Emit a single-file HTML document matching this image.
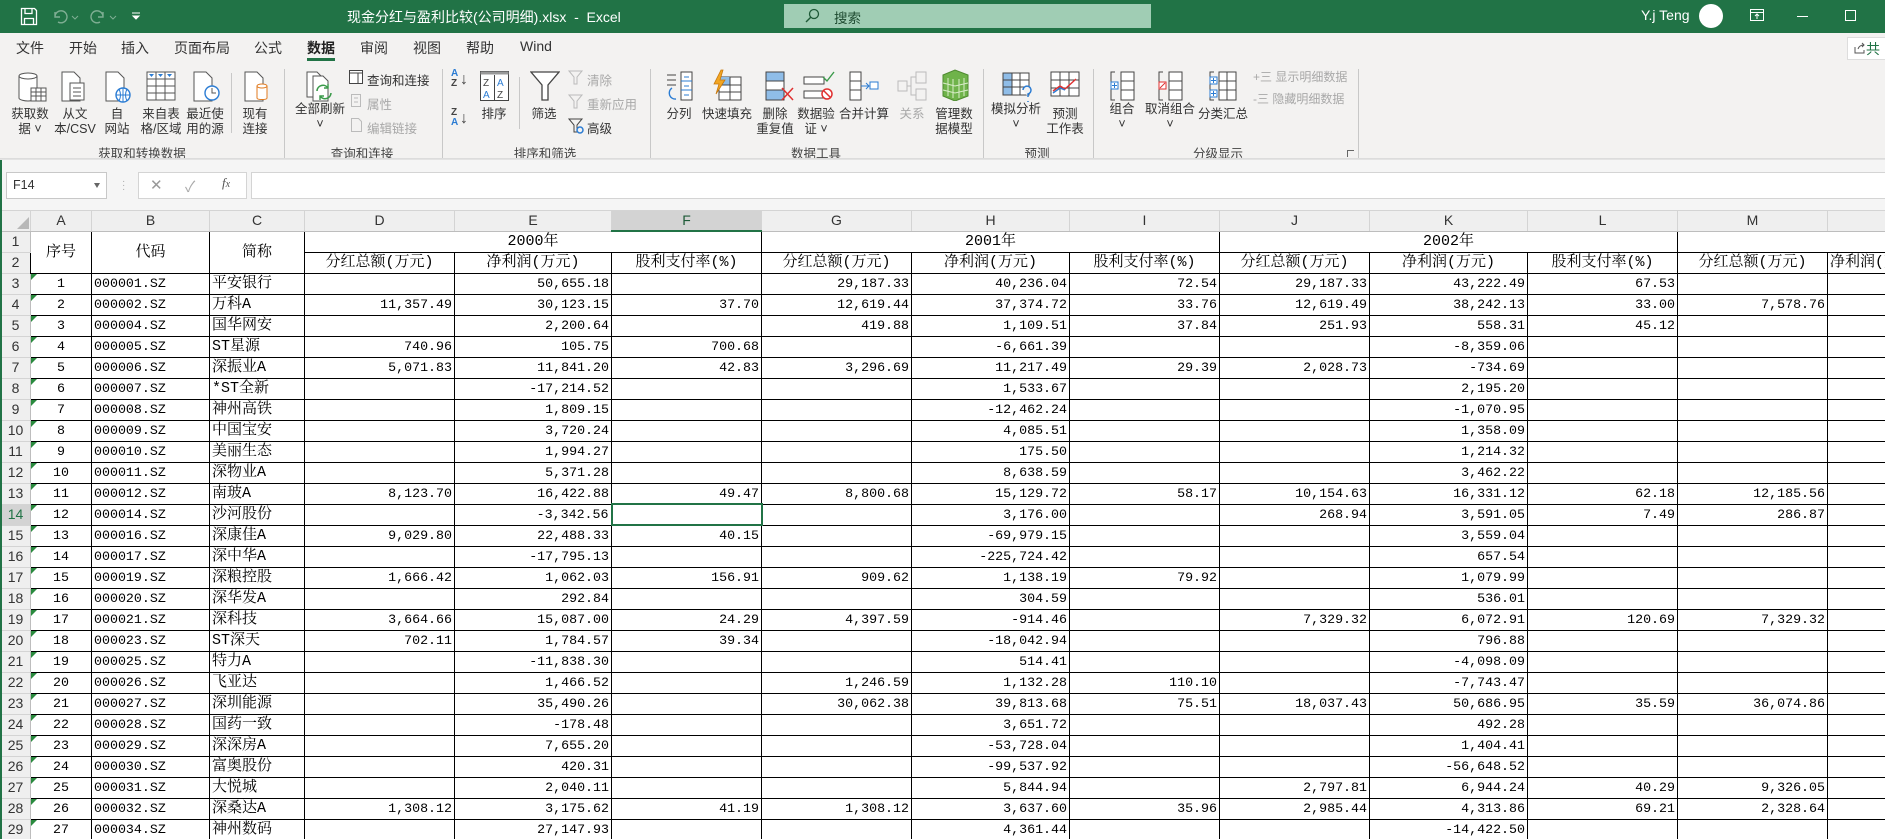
<!DOCTYPE html>
<html><head><meta charset="utf-8">
<style>
*{margin:0;padding:0;box-sizing:border-box}
body{width:1885px;height:839px;overflow:hidden;background:#fff;font-family:"Liberation Sans","Noto Sans CJK SC",sans-serif;position:relative}
.abs{position:absolute}
#title{left:0;top:0;width:1885px;height:33px;background:#217346;color:#fff}
#ribbon{left:0;top:33px;width:1885px;height:127px;background:#f3f2f1}
.tab{position:absolute;top:5px;font-size:14px;color:#333}
.lbl{position:absolute;width:90px;text-align:center;font-size:12.5px;color:#333;line-height:15px}
.sm{position:absolute;font-size:12.5px;color:#333;white-space:nowrap}
.g{color:#a8a8a8}
.sep{position:absolute;width:1px;background:#c8c8c8}
.glbl{position:absolute;top:110px;width:120px;text-align:center;font-size:12.5px;color:#444}
#fbar{left:0;top:160px;width:1885px;height:50px;background:#f5f5f5}
#grid{left:0;top:210px;width:1885px;height:629px;overflow:hidden}
table{border-collapse:collapse;table-layout:fixed;width:2027px;font-family:"Liberation Mono","Noto Serif CJK SC",monospace;font-size:13.3px;color:#000}
td{height:21px;border:1px solid #000;white-space:nowrap;overflow:hidden;text-align:right;padding:0 2px;line-height:19px}
tr.ch td{height:20px;background:#efefef;border:1px solid #d4d4d4;border-bottom-color:#bdbdbd;text-align:center;font-family:"Liberation Sans",sans-serif;font-size:14px;color:#333}
td.rh{background:#efefef;border:1px solid #d4d4d4;border-right-color:#bdbdbd;text-align:center;font-family:"Liberation Sans",sans-serif;font-size:14px;color:#333;padding:0}
td.a{text-align:center;position:relative}
td.a::before{content:"";position:absolute;left:0;top:0;border-top:6px solid #2a8a3e;border-right:6px solid transparent}
td.b{text-align:left}
td.c{text-align:left;font-size:15px}
td.h{text-align:center;font-size:15px}
</style></head><body>

<div id="title" class="abs">
 <svg class="abs" style="left:20px;top:7px" width="18" height="19" viewBox="0 0 18 19"><path d="M1.5 1.5h13l2 2v14h-15z M5 1.5v5h7v-5 M4.5 17.5v-6h9v6" fill="none" stroke="#fff" stroke-width="1.3"/></svg>
 <svg class="abs" style="left:50px;top:8px" width="30" height="17"><path d="M5 4v5h5 M5 9 A6 6 0 1 1 8 14" fill="none" stroke="#7fae93" stroke-width="1.4"/><path d="M22 8l3 3 3-3" fill="none" stroke="#7fae93"/></svg>
 <svg class="abs" style="left:88px;top:8px" width="30" height="17"><path d="M15 4v5h-5 M15 9 A6 6 0 1 0 12 14" fill="none" stroke="#7fae93" stroke-width="1.4"/><path d="M22 8l3 3 3-3" fill="none" stroke="#7fae93"/></svg>
 <svg class="abs" style="left:131px;top:11px" width="10" height="10"><path d="M1 2h8 M2 5l3 3 3-3z" stroke="#fff" fill="#fff"/></svg>
 <div class="abs" style="left:347px;top:7px;font-size:14px;font-family:'Liberation Sans','Noto Sans CJK SC',sans-serif">现金分红与盈利比较(公司明细).xlsx&nbsp; - &nbsp;Excel</div>
 <div class="abs" style="left:784px;top:4px;width:367px;height:24px;background:#a0cdb4"></div>
 <svg class="abs" style="left:804px;top:8px" width="16" height="16"><circle cx="10" cy="6" r="4.5" fill="none" stroke="#1e5a37" stroke-width="1.3"/><path d="M7 9l-5 5" stroke="#1e5a37" stroke-width="1.4"/></svg>
 <div class="abs" style="left:834px;top:7px;font-size:13.5px;color:#1e4a30">搜索</div>
 <div class="abs" style="left:1641px;top:7px;font-size:14px">Y.j Teng</div>
 <div class="abs" style="left:1699px;top:4px;width:24px;height:24px;border-radius:50%;background:#fff"></div>
 <svg class="abs" style="left:1750px;top:9px" width="14" height="13"><rect x="0.5" y="0.5" width="13" height="11" fill="none" stroke="#fff"/><path d="M0.5 3.5h13 M7 10V5 M5 7l2-2 2 2" stroke="#fff" fill="none"/></svg>
 <div class="abs" style="left:1797px;top:16px;width:11px;height:1px;background:#fff"></div>
 <div class="abs" style="left:1845px;top:10px;width:11px;height:11px;border:1px solid #fff"></div>
</div>

<div id="ribbon" class="abs">
 <div class="tab" style="left:16px">文件</div>
 <div class="tab" style="left:69px">开始</div>
 <div class="tab" style="left:121px">插入</div>
 <div class="tab" style="left:174px">页面布局</div>
 <div class="tab" style="left:254px">公式</div>
 <div class="tab" style="left:307px;font-weight:bold;color:#222">数据</div>
 <div class="abs" style="left:307px;top:25px;width:28px;height:3px;background:#217346"></div>
 <div class="tab" style="left:360px">审阅</div>
 <div class="tab" style="left:413px">视图</div>
 <div class="tab" style="left:466px">帮助</div>
 <div class="tab" style="left:520px">Wind</div>
 <div class="abs" style="left:1847px;top:4px;width:45px;height:23px;background:#fff;border:1px solid #ddd"></div>
 <svg class="abs" style="left:1854px;top:9px" width="12" height="12"><path d="M1 5v6h9v-3 M4 7c1-3 3-4 6-4 M8 1l2 2-2 2" fill="none" stroke="#555"/></svg>
 <div class="abs" style="left:1866px;top:6px;font-size:14px;color:#217346">共</div>

 <!-- group 1 -->
 <svg class="abs" style="left:16px;top:38px" width="32" height="32"><path d="M3 5v22c0 2 6 3 9 3s9-1 9-3V5" fill="#fff" stroke="#555"/><ellipse cx="12" cy="5" rx="9" ry="3" fill="#fff" stroke="#555"/><rect x="15" y="17" width="15" height="13" fill="#fff" stroke="#555"/><path d="M15 21h15M15 25h15M20 17v13M25 17v13" stroke="#555"/></svg>
 <div class="lbl" style="left:-15px;top:74px">获取数<br>据 ˅</div>
 <svg class="abs" style="left:61px;top:38px" width="26" height="32"><path d="M1 1h12l6 6v23H1z" fill="#fff" stroke="#555"/><rect x="9" y="12" width="14" height="17" fill="#fff" stroke="#555"/><path d="M12 17h8M12 21h8M12 25h8" stroke="#555"/></svg>
 <div class="lbl" style="left:30px;top:74px">从文<br>本/CSV</div>
 <svg class="abs" style="left:105px;top:38px" width="26" height="32"><path d="M1 1h12l6 6v23H1z" fill="#fff" stroke="#555"/><circle cx="18" cy="24" r="7" fill="#fff" stroke="#2b7cd3" stroke-width="1.4"/><path d="M11 24h14M18 17v14M14 18c2 4 2 8 0 12M22 18c-2 4-2 8 0 12" stroke="#2b7cd3" fill="none"/></svg>
 <div class="lbl" style="left:72px;top:74px">自<br>网站</div>
 <svg class="abs" style="left:146px;top:38px" width="30" height="30"><rect x="1" y="1" width="28" height="28" fill="#fff" stroke="#555"/><path d="M1 8h28M1 15h28M1 22h28M10 1v28M19 1v28" stroke="#555"/><path d="M3 3h5l-2.5 3zM12 3h5l-2.5 3zM21 3h5l-2.5 3z" fill="#2b7cd3"/></svg>
 <div class="lbl" style="left:116px;top:74px">来自表<br>格/区域</div>
 <svg class="abs" style="left:193px;top:38px" width="28" height="32"><path d="M1 1h12l6 6v23H1z" fill="#fff" stroke="#555"/><circle cx="19" cy="22" r="7" fill="#fff" stroke="#2b7cd3" stroke-width="1.4"/><path d="M19 17v5h4" stroke="#555" fill="none"/></svg>
 <div class="lbl" style="left:160px;top:74px">最近使<br>用的源</div>
 <div class="sep" style="left:231px;top:40px;height:60px"></div>
 <svg class="abs" style="left:244px;top:38px" width="28" height="32"><path d="M1 1h12l6 6v23H1z" fill="#fff" stroke="#555"/><path d="M13 15v12c0 2 10 2 10 0V15" fill="#fff" stroke="#e07a1f"/><ellipse cx="18" cy="15" rx="5" ry="2" fill="#fff" stroke="#e07a1f"/></svg>
 <div class="lbl" style="left:210px;top:74px">现有<br>连接</div>
 <div class="glbl" style="left:82px">获取和转换数据</div>
 <div class="sep" style="left:284px;top:36px;height:122px"></div>

 <!-- group 2 -->
 <svg class="abs" style="left:306px;top:38px" width="32" height="32"><path d="M1 1h10l5 5v20H1z" fill="#fff" stroke="#555"/><path d="M7 5h10l5 5v20H7z" fill="#fff" stroke="#555"/><path d="M11 20a6 6 0 0 1 11-3M25 22a6 6 0 0 1-11 3" fill="none" stroke="#3a9a4a" stroke-width="1.6"/><path d="M22 13v4h-4M14 29v-4h4" fill="none" stroke="#3a9a4a" stroke-width="1.4"/></svg>
 <div class="lbl" style="left:275px;top:69px">全部刷新<br>˅</div>
 <svg class="abs" style="left:349px;top:37px" width="14" height="14"><rect x="0.5" y="0.5" width="13" height="13" fill="#fff" stroke="#444"/><path d="M0.5 3h13M9 3v11" stroke="#444"/></svg>
 <div class="sm" style="left:367px;top:37px">查询和连接</div>
 <svg class="abs" style="left:351px;top:61px" width="12" height="14"><rect x="0.5" y="0.5" width="9" height="12" fill="none" stroke="#bbb"/><path d="M3 4h4M3 8h4" stroke="#bbb"/></svg>
 <div class="sm g" style="left:367px;top:61px">属性</div>
 <svg class="abs" style="left:351px;top:85px" width="12" height="14"><path d="M0.5 0.5h7l3 3v10h-10z" fill="none" stroke="#bbb"/></svg>
 <div class="sm g" style="left:367px;top:85px">编辑链接</div>
 <div class="glbl" style="left:302px">查询和连接</div>
 <div class="sep" style="left:442px;top:36px;height:122px"></div>

 <!-- group 3 -->
 <div class="abs" style="left:451px;top:36px;font-size:10px;line-height:10px;color:#2b7cd3;font-weight:bold">A<br><span style="color:#444">Z</span></div><div class="abs" style="left:460px;top:38px;font-size:16px;color:#444">↓</div>
 <div class="abs" style="left:451px;top:75px;font-size:10px;line-height:10px;color:#444;font-weight:bold">Z<br><span style="color:#2b7cd3">A</span></div><div class="abs" style="left:460px;top:77px;font-size:16px;color:#444">↓</div>
 <svg class="abs" style="left:480px;top:38px" width="29" height="30"><rect x="0.5" y="0.5" width="28" height="29" fill="#fff" stroke="#444"/><rect x="0.5" y="0.5" width="28" height="3" fill="#999"/><path d="M14.5 4v26" stroke="#444"/><text x="3" y="15" font-size="10" fill="#444" font-family="Liberation Sans">Z</text><text x="3" y="27" font-size="10" fill="#2b7cd3" font-family="Liberation Sans">A</text><text x="17" y="15" font-size="10" fill="#2b7cd3" font-family="Liberation Sans">A</text><text x="17" y="27" font-size="10" fill="#444" font-family="Liberation Sans">Z</text></svg>
 <div class="lbl" style="left:449px;top:74px">排序</div>
 <div class="sep" style="left:519px;top:44px;height:52px"></div>
 <svg class="abs" style="left:530px;top:38px" width="30" height="30"><path d="M1 1h28L18 14v15h-6V14z" fill="#fff" stroke="#444" stroke-width="1.3"/></svg>
 <div class="lbl" style="left:499px;top:74px">筛选</div>
 <svg class="abs" style="left:568px;top:37px" width="16" height="16"><path d="M1 1h13L9 7v7H6V7z" fill="none" stroke="#bbb"/></svg>
 <div class="sm g" style="left:587px;top:37px">清除</div>
 <svg class="abs" style="left:568px;top:61px" width="16" height="16"><path d="M1 1h13L9 7v7H6V7z" fill="none" stroke="#bbb"/></svg>
 <div class="sm g" style="left:587px;top:61px">重新应用</div>
 <svg class="abs" style="left:568px;top:85px" width="16" height="16"><path d="M1 1h13L9 7v7H6V7z" fill="none" stroke="#444"/><circle cx="12" cy="12" r="3" fill="none" stroke="#2b7cd3" stroke-width="1.5"/></svg>
 <div class="sm" style="left:587px;top:85px">高级</div>
 <div class="glbl" style="left:485px">排序和筛选</div>
 <div class="sep" style="left:650px;top:36px;height:122px"></div>

 <!-- group 4 -->
 <svg class="abs" style="left:666px;top:38px" width="30" height="30"><path d="M1 4h9M1 9h9M1 14h9" stroke="#444"/><rect x="15" y="1" width="11" height="28" fill="#fff" stroke="#444"/><path d="M15 10h11M15 19h11M18 6h5M18 15h5M18 24h5" stroke="#2b7cd3"/><path d="M6 17a6 6 0 0 0 4 11" fill="none" stroke="#2b7cd3" stroke-width="1.4"/></svg>
 <div class="lbl" style="left:634px;top:74px">分列</div>
 <svg class="abs" style="left:710px;top:36px" width="32" height="32"><rect x="9" y="8" width="22" height="23" fill="#fff" stroke="#444"/><rect x="9" y="8" width="11" height="8" fill="#8fbde8"/><path d="M9 16h22M9 23h22M20 8v23" stroke="#444"/><path d="M11 1L4 15h5l-3 10 9-14h-5l3-10z" fill="#f2a623" stroke="#c8780b" stroke-width="0.8"/></svg>
 <div class="lbl" style="left:682px;top:74px">快速填充</div>
 <svg class="abs" style="left:765px;top:38px" width="30" height="30"><rect x="1" y="1" width="18" height="28" fill="#fff" stroke="#444"/><rect x="1" y="1" width="18" height="9" fill="#8fbde8" stroke="#444"/><rect x="1" y="19" width="18" height="10" fill="#8fbde8" stroke="#444"/><path d="M17 17l11 12M28 17L17 29" stroke="#e03030" stroke-width="1.5"/></svg>
 <div class="lbl" style="left:730px;top:74px">删除<br>重复值</div>
 <svg class="abs" style="left:803px;top:38px" width="32" height="30"><rect x="1" y="6" width="20" height="7" fill="#fff" stroke="#444"/><rect x="1" y="20" width="20" height="7" fill="#fff" stroke="#444"/><path d="M20 6l4 4 7-9" fill="none" stroke="#3a9a4a" stroke-width="1.4"/><circle cx="24" cy="23" r="5" fill="#fff" stroke="#e03030" stroke-width="1.5"/><path d="M21 20l6 6" stroke="#e03030" stroke-width="1.5"/></svg>
 <div class="lbl" style="left:771px;top:74px">数据验<br>证 ˅</div>
 <svg class="abs" style="left:849px;top:38px" width="30" height="30"><rect x="1" y="1" width="11" height="28" fill="#fff" stroke="#444"/><path d="M1 10h11M1 19h11" stroke="#444"/><path d="M12 15h8M17 12l3 3-3 3" fill="none" stroke="#2b7cd3"/><rect x="21" y="11" width="8" height="7" fill="#fff" stroke="#2b7cd3"/></svg>
 <div class="lbl" style="left:819px;top:74px">合并计算</div>
 <svg class="abs" style="left:897px;top:38px" width="30" height="30"><rect x="1" y="10" width="9" height="10" fill="none" stroke="#bbb"/><rect x="19" y="1" width="10" height="11" fill="none" stroke="#bbb"/><rect x="19" y="18" width="10" height="11" fill="none" stroke="#bbb"/><path d="M10 15h4V6h5M14 15v9h5" fill="none" stroke="#bbb"/></svg>
 <div class="lbl g" style="left:867px;top:74px">关系</div>
 <svg class="abs" style="left:940px;top:36px" width="30" height="32"><path d="M3 6l12-5 13 5v21l-13 5-12-5z" fill="#6fb34a" stroke="#4e8a30"/><path d="M8 9v18M13 10v19M19 10v19M24 9v18M3 14l12 3 13-3M3 21l12 3 13-3" stroke="#d8ecc8" fill="none"/></svg>
 <div class="lbl" style="left:909px;top:74px">管理数<br>据模型</div>
 <div class="glbl" style="left:756px">数据工具</div>
 <div class="sep" style="left:983px;top:36px;height:122px"></div>

 <!-- group 5 -->
 <svg class="abs" style="left:1002px;top:39px" width="32" height="32"><rect x="1" y="1" width="26" height="22" fill="#fff" stroke="#444"/><rect x="1" y="1" width="9" height="22" fill="#8fbde8" stroke="#444"/><path d="M1 8h26M1 15h26M10 1v22M18 1v22" stroke="#444"/><path d="M21 18a4 4 0 1 1 5 4v3M26 29v1" fill="#f3f2f1" stroke="#2b7cd3" stroke-width="1.5"/></svg>
 <div class="lbl" style="left:971px;top:69px">模拟分析<br>˅</div>
 <svg class="abs" style="left:1050px;top:38px" width="30" height="30"><rect x="1" y="1" width="28" height="24" fill="#fff" stroke="#444"/><path d="M1 9h28M1 17h28M10 1v24M19 1v24" stroke="#444"/><path d="M3 20l7-5 5 3 11-10" fill="none" stroke="#e03030" stroke-width="1.4"/><path d="M3 22l7-5 5 2" fill="none" stroke="#2b7cd3" stroke-width="1.4"/></svg>
 <div class="lbl" style="left:1020px;top:74px">预测<br>工作表</div>
 <div class="glbl" style="left:977px">预测</div>
 <div class="sep" style="left:1093px;top:36px;height:122px"></div>

 <!-- group 6 -->
 <svg class="abs" style="left:1110px;top:38px" width="26" height="30"><path d="M5 1H1v28h4" fill="none" stroke="#444"/><rect x="11" y="1" width="13" height="28" fill="#fff" stroke="#444"/><path d="M11 10h13M11 19h13" stroke="#444"/><rect x="1" y="11" width="7" height="7" fill="#fff" stroke="#2b7cd3"/><path d="M4.5 12v5M2 14.5h5" stroke="#2b7cd3"/></svg>
 <div class="lbl" style="left:1077px;top:69px">组合<br>˅</div>
 <svg class="abs" style="left:1158px;top:38px" width="26" height="30"><path d="M5 1H1v28h4" fill="none" stroke="#444"/><rect x="11" y="1" width="13" height="28" fill="#fff" stroke="#444"/><path d="M11 10h13M11 19h13" stroke="#444"/><rect x="1" y="11" width="7" height="7" fill="#fff" stroke="#e03030"/><path d="M2 17l5-5" stroke="#e03030"/></svg>
 <div class="lbl" style="left:1125px;top:69px">取消组合<br>˅</div>
 <svg class="abs" style="left:1209px;top:38px" width="28" height="30"><path d="M5 1H1v28h4" fill="none" stroke="#444"/><rect x="10" y="1" width="17" height="28" fill="#fff" stroke="#444"/><path d="M10 10h17M10 19h17M18 1v28" stroke="#444"/><rect x="1" y="6" width="7" height="7" fill="#fff" stroke="#2b7cd3"/><rect x="1" y="19" width="7" height="7" fill="#fff" stroke="#2b7cd3"/><path d="M4.5 7v5M2 9.5h5M4.5 20v5M2 22.5h5" stroke="#2b7cd3"/></svg>
 <div class="lbl" style="left:1178px;top:74px">分类汇总</div>
 <div class="sm g" style="left:1253px;top:35px;font-size:12px">+三 显示明细数据</div>
 <div class="sm g" style="left:1253px;top:57px;font-size:12px">-三 隐藏明细数据</div>
 <div class="glbl" style="left:1158px">分级显示</div>
 <div class="abs" style="left:1347px;top:117px;width:7px;height:7px;border-left:1px solid #666;border-top:1px solid #666"></div>
 <div class="sep" style="left:1358px;top:36px;height:122px"></div>
</div>
<div class="abs" style="left:0;top:158px;width:1885px;height:4px;background:linear-gradient(#d8d8d8,#f5f5f5)"></div>

<div id="fbar" class="abs">
 <div class="abs" style="left:6px;top:12px;width:101px;height:27px;background:#fff;border:1px solid #c8c8c8;font-size:12.5px;padding:5px 6px;color:#333">F14</div>
 <div class="abs" style="left:94px;top:23px;border-top:5px solid #666;border-left:3.5px solid transparent;border-right:3.5px solid transparent"></div>
 <div class="abs" style="left:122px;top:20px;color:#aaa;font-size:10px;line-height:4px">·<br>·<br>·</div>
 <div class="abs" style="left:138px;top:12px;width:109px;height:27px;background:#fff;border:1px solid #d4d4d4"></div>
 <div class="abs" style="left:150px;top:16px;color:#999;font-size:15px">✕</div>
 <div class="abs" style="left:185px;top:16px;color:#aaa;font-size:15px">✓</div>
 <div class="abs" style="left:222px;top:15px;color:#555;font-size:13px;font-style:italic;font-family:'Liberation Serif',serif">f<span style="font-size:10px">x</span></div>
 <div class="abs" style="left:251px;top:12px;width:1640px;height:27px;background:#fff;border:1px solid #d4d4d4"></div>
</div>

<div id="grid" class="abs">
<table>
<colgroup><col style="width:30px"><col style="width:61px"><col style="width:118px"><col style="width:95px"><col style="width:150px"><col style="width:157px"><col style="width:150px"><col style="width:150px"><col style="width:158px"><col style="width:150px"><col style="width:150px"><col style="width:158px"><col style="width:150px"><col style="width:150px"><col style="width:200px"></colgroup>
<tr class="ch"><td style="background:#efefef"><svg width="12" height="12" style="display:block;margin:4px 0 0 14px"><path d="M12 0v12H0z" fill="#b8b8b8"/></svg></td><td>A</td><td>B</td><td>C</td><td>D</td><td>E</td><td style="background:#d3d3d3;border-bottom:2px solid #217346;color:#1e5a37">F</td><td>G</td><td>H</td><td>I</td><td>J</td><td>K</td><td>L</td><td>M</td><td></td></tr>
<tr><td class="rh">1</td><td class="h" rowspan="2">序号</td><td class="h" rowspan="2">代码</td><td class="h" rowspan="2">简称</td><td class="h" colspan="3">2000年</td><td class="h" colspan="3">2001年</td><td class="h" colspan="3">2002年</td><td class="h" colspan="2" style="text-align:right;padding-right:0">2</td></tr>
<tr><td class="rh">2</td><td class="h">分红总额(万元)</td><td class="h">净利润(万元)</td><td class="h">股利支付率(%)</td><td class="h">分红总额(万元)</td><td class="h">净利润(万元)</td><td class="h">股利支付率(%)</td><td class="h">分红总额(万元)</td><td class="h">净利润(万元)</td><td class="h">股利支付率(%)</td><td class="h">分红总额(万元)</td><td class="h" style="text-align:left">净利润(万元)</td></tr>
<tr><td class="rh">3</td><td class="a">1</td><td class="b">000001.SZ</td><td class="c">平安银行</td><td></td><td>50,655.18</td><td></td><td>29,187.33</td><td>40,236.04</td><td>72.54</td><td>29,187.33</td><td>43,222.49</td><td>67.53</td><td></td><td></td></tr>
<tr><td class="rh">4</td><td class="a">2</td><td class="b">000002.SZ</td><td class="c">万科A</td><td>11,357.49</td><td>30,123.15</td><td>37.70</td><td>12,619.44</td><td>37,374.72</td><td>33.76</td><td>12,619.49</td><td>38,242.13</td><td>33.00</td><td>7,578.76</td><td></td></tr>
<tr><td class="rh">5</td><td class="a">3</td><td class="b">000004.SZ</td><td class="c">国华网安</td><td></td><td>2,200.64</td><td></td><td>419.88</td><td>1,109.51</td><td>37.84</td><td>251.93</td><td>558.31</td><td>45.12</td><td></td><td></td></tr>
<tr><td class="rh">6</td><td class="a">4</td><td class="b">000005.SZ</td><td class="c">ST星源</td><td>740.96</td><td>105.75</td><td>700.68</td><td></td><td>-6,661.39</td><td></td><td></td><td>-8,359.06</td><td></td><td></td><td></td></tr>
<tr><td class="rh">7</td><td class="a">5</td><td class="b">000006.SZ</td><td class="c">深振业A</td><td>5,071.83</td><td>11,841.20</td><td>42.83</td><td>3,296.69</td><td>11,217.49</td><td>29.39</td><td>2,028.73</td><td>-734.69</td><td></td><td></td><td></td></tr>
<tr><td class="rh">8</td><td class="a">6</td><td class="b">000007.SZ</td><td class="c">*ST全新</td><td></td><td>-17,214.52</td><td></td><td></td><td>1,533.67</td><td></td><td></td><td>2,195.20</td><td></td><td></td><td></td></tr>
<tr><td class="rh">9</td><td class="a">7</td><td class="b">000008.SZ</td><td class="c">神州高铁</td><td></td><td>1,809.15</td><td></td><td></td><td>-12,462.24</td><td></td><td></td><td>-1,070.95</td><td></td><td></td><td></td></tr>
<tr><td class="rh">10</td><td class="a">8</td><td class="b">000009.SZ</td><td class="c">中国宝安</td><td></td><td>3,720.24</td><td></td><td></td><td>4,085.51</td><td></td><td></td><td>1,358.09</td><td></td><td></td><td></td></tr>
<tr><td class="rh">11</td><td class="a">9</td><td class="b">000010.SZ</td><td class="c">美丽生态</td><td></td><td>1,994.27</td><td></td><td></td><td>175.50</td><td></td><td></td><td>1,214.32</td><td></td><td></td><td></td></tr>
<tr><td class="rh">12</td><td class="a">10</td><td class="b">000011.SZ</td><td class="c">深物业A</td><td></td><td>5,371.28</td><td></td><td></td><td>8,638.59</td><td></td><td></td><td>3,462.22</td><td></td><td></td><td></td></tr>
<tr><td class="rh">13</td><td class="a">11</td><td class="b">000012.SZ</td><td class="c">南玻A</td><td>8,123.70</td><td>16,422.88</td><td>49.47</td><td>8,800.68</td><td>15,129.72</td><td>58.17</td><td>10,154.63</td><td>16,331.12</td><td>62.18</td><td>12,185.56</td><td></td></tr>
<tr><td class="rh" style="background:#d3d3d3;color:#217346">14</td><td class="a">12</td><td class="b">000014.SZ</td><td class="c">沙河股份</td><td></td><td>-3,342.56</td><td style="border:2px solid #217346"></td><td></td><td>3,176.00</td><td></td><td>268.94</td><td>3,591.05</td><td>7.49</td><td>286.87</td><td></td></tr>
<tr><td class="rh">15</td><td class="a">13</td><td class="b">000016.SZ</td><td class="c">深康佳A</td><td>9,029.80</td><td>22,488.33</td><td>40.15</td><td></td><td>-69,979.15</td><td></td><td></td><td>3,559.04</td><td></td><td></td><td></td></tr>
<tr><td class="rh">16</td><td class="a">14</td><td class="b">000017.SZ</td><td class="c">深中华A</td><td></td><td>-17,795.13</td><td></td><td></td><td>-225,724.42</td><td></td><td></td><td>657.54</td><td></td><td></td><td></td></tr>
<tr><td class="rh">17</td><td class="a">15</td><td class="b">000019.SZ</td><td class="c">深粮控股</td><td>1,666.42</td><td>1,062.03</td><td>156.91</td><td>909.62</td><td>1,138.19</td><td>79.92</td><td></td><td>1,079.99</td><td></td><td></td><td></td></tr>
<tr><td class="rh">18</td><td class="a">16</td><td class="b">000020.SZ</td><td class="c">深华发A</td><td></td><td>292.84</td><td></td><td></td><td>304.59</td><td></td><td></td><td>536.01</td><td></td><td></td><td></td></tr>
<tr><td class="rh">19</td><td class="a">17</td><td class="b">000021.SZ</td><td class="c">深科技</td><td>3,664.66</td><td>15,087.00</td><td>24.29</td><td>4,397.59</td><td>-914.46</td><td></td><td>7,329.32</td><td>6,072.91</td><td>120.69</td><td>7,329.32</td><td></td></tr>
<tr><td class="rh">20</td><td class="a">18</td><td class="b">000023.SZ</td><td class="c">ST深天</td><td>702.11</td><td>1,784.57</td><td>39.34</td><td></td><td>-18,042.94</td><td></td><td></td><td>796.88</td><td></td><td></td><td></td></tr>
<tr><td class="rh">21</td><td class="a">19</td><td class="b">000025.SZ</td><td class="c">特力A</td><td></td><td>-11,838.30</td><td></td><td></td><td>514.41</td><td></td><td></td><td>-4,098.09</td><td></td><td></td><td></td></tr>
<tr><td class="rh">22</td><td class="a">20</td><td class="b">000026.SZ</td><td class="c">飞亚达</td><td></td><td>1,466.52</td><td></td><td>1,246.59</td><td>1,132.28</td><td>110.10</td><td></td><td>-7,743.47</td><td></td><td></td><td></td></tr>
<tr><td class="rh">23</td><td class="a">21</td><td class="b">000027.SZ</td><td class="c">深圳能源</td><td></td><td>35,490.26</td><td></td><td>30,062.38</td><td>39,813.68</td><td>75.51</td><td>18,037.43</td><td>50,686.95</td><td>35.59</td><td>36,074.86</td><td></td></tr>
<tr><td class="rh">24</td><td class="a">22</td><td class="b">000028.SZ</td><td class="c">国药一致</td><td></td><td>-178.48</td><td></td><td></td><td>3,651.72</td><td></td><td></td><td>492.28</td><td></td><td></td><td></td></tr>
<tr><td class="rh">25</td><td class="a">23</td><td class="b">000029.SZ</td><td class="c">深深房A</td><td></td><td>7,655.20</td><td></td><td></td><td>-53,728.04</td><td></td><td></td><td>1,404.41</td><td></td><td></td><td></td></tr>
<tr><td class="rh">26</td><td class="a">24</td><td class="b">000030.SZ</td><td class="c">富奥股份</td><td></td><td>420.31</td><td></td><td></td><td>-99,537.92</td><td></td><td></td><td>-56,648.52</td><td></td><td></td><td></td></tr>
<tr><td class="rh">27</td><td class="a">25</td><td class="b">000031.SZ</td><td class="c">大悦城</td><td></td><td>2,040.11</td><td></td><td></td><td>5,844.94</td><td></td><td>2,797.81</td><td>6,944.24</td><td>40.29</td><td>9,326.05</td><td></td></tr>
<tr><td class="rh">28</td><td class="a">26</td><td class="b">000032.SZ</td><td class="c">深桑达A</td><td>1,308.12</td><td>3,175.62</td><td>41.19</td><td>1,308.12</td><td>3,637.60</td><td>35.96</td><td>2,985.44</td><td>4,313.86</td><td>69.21</td><td>2,328.64</td><td></td></tr>
<tr><td class="rh">29</td><td class="a">27</td><td class="b">000034.SZ</td><td class="c">神州数码</td><td></td><td>27,147.93</td><td></td><td></td><td>4,361.44</td><td></td><td></td><td>-14,422.50</td><td></td><td></td><td></td></tr>
</table>
</div>
<div class="abs" style="left:0;top:160px;width:2px;height:679px;background:#217346"></div>
</body></html>
